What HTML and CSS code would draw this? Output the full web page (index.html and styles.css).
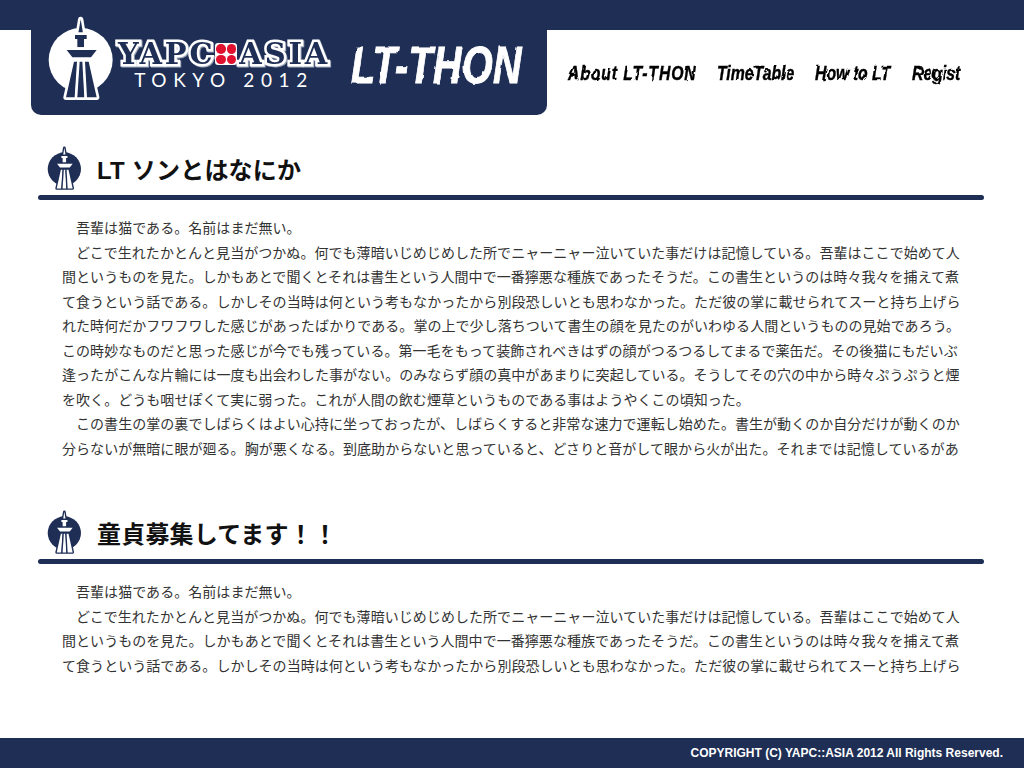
FILE: index.html
```html
<!DOCTYPE html>
<html lang="ja">
<head>
<meta charset="utf-8">
<title>YAPC::ASIA TOKYO 2012 LT-THON</title>
<link rel="stylesheet" href="styles.css">
</head>
<body>
<svg class="defs" width="0" height="0" aria-hidden="true">
  <defs>
    <filter id="brush" x="-5%" y="-10%" width="110%" height="120%">
      <feTurbulence type="fractalNoise" baseFrequency="0.09" numOctaves="2" seed="4" result="n"/>
      <feDisplacementMap in="SourceGraphic" in2="n" scale="3"/>
    </filter>
    <symbol id="tower" viewBox="0 0 240 300">
      <circle class="t-disc" cx="122" cy="150" r="96"/>
      <g class="t-shape">
        <path d="M122 28L129 70H115Z"/>
        <path d="M105 75H140V87H132V112H112V87H105Z"/>
        <path d="M80 120H170L153 142H97Z"/>
        <path d="M102 155H113L105 262H78Z"/>
        <path d="M119 155H129L134 262H112Z"/>
        <path d="M135 155H146L170 262H141Z"/>
      </g>
    </symbol>
  </defs>
</svg>
<div class="page">
  <header class="header">
    <div class="brand">
      <svg class="logo-tower"><use href="#tower"/></svg>
      <div class="wordmark">
        <div class="yapc"><span>YAPC</span><i class="dots"><b></b><b></b><b></b><b></b></i><span>ASIA</span></div>
        <div class="tokyo">TOKYO 2012</div>
      </div>
      <div class="thon">LT-THON</div>
    </div>
    <nav class="nav">
      <a class="nav-about">About LT-THON</a>
      <a class="nav-time">TimeTable</a>
      <a class="nav-how">How to LT</a>
      <a class="nav-regist">Regist</a>
    </nav>
  </header>
  <main class="main">
    <section class="section">
      <h2 class="title"><svg class="title-icon"><use href="#tower"/></svg><span class="title-text">LT ソンとはなにか</span></h2>
      <div class="rule"></div>
      <div class="text">
        <p>吾輩は猫である。名前はまだ無い。</p>
        <p>どこで生れたかとんと見当がつかぬ。何でも薄暗いじめじめした所でニャーニャー泣いていた事だけは記憶している。吾輩はここで始めて人間というものを見た。しかもあとで聞くとそれは書生という人間中で一番獰悪な種族であったそうだ。この書生というのは時々我々を捕えて煮て食うという話である。しかしその当時は何という考もなかったから別段恐しいとも思わなかった。ただ彼の掌に載せられてスーと持ち上げられた時何だかフワフワした感じがあったばかりである。掌の上で少し落ちついて書生の顔を見たのがいわゆる人間というものの見始であろう。この時妙なものだと思った感じが今でも残っている。第一毛をもって装飾されべきはずの顔がつるつるしてまるで薬缶だ。その後猫にもだいぶ逢ったがこんな片輪には一度も出会わした事がない。のみならず顔の真中があまりに突起している。そうしてその穴の中から時々ぷうぷうと煙を吹く。どうも咽せぽくて実に弱った。これが人間の飲む煙草というものである事はようやくこの頃知った。</p>
        <p>この書生の掌の裏でしばらくはよい心持に坐っておったが、しばらくすると非常な速力で運転し始めた。書生が動くのか自分だけが動くのか分らないが無暗に眼が廻る。胸が悪くなる。到底助からないと思っていると、どさりと音がして眼から火が出た。それまでは記憶しているがあ</p>
      </div>
    </section>
    <section class="section">
      <h2 class="title"><svg class="title-icon"><use href="#tower"/></svg><span class="title-text">童貞募集してます！！</span></h2>
      <div class="rule"></div>
      <div class="text">
        <p>吾輩は猫である。名前はまだ無い。</p>
        <p>どこで生れたかとんと見当がつかぬ。何でも薄暗いじめじめした所でニャーニャー泣いていた事だけは記憶している。吾輩はここで始めて人間というものを見た。しかもあとで聞くとそれは書生という人間中で一番獰悪な種族であったそうだ。この書生というのは時々我々を捕えて煮て食うという話である。しかしその当時は何という考もなかったから別段恐しいとも思わなかった。ただ彼の掌に載せられてスーと持ち上げら</p>
      </div>
    </section>
  </main>
  <footer class="footer">COPYRIGHT (C) YAPC::ASIA 2012 All Rights Reserved.</footer>
</div>
</body>
</html>
```
FILE: styles.css
```css
* { box-sizing: border-box; }
html, body { margin: 0; padding: 0; background: #fff; }
.defs { display: block; height: 0; }
.page {
  width: 1024px;
  height: 768px;
  display: flex;
  flex-direction: column;
  overflow: hidden;
  font-family: "Noto Sans CJK JP", sans-serif;
  color: #333;
}
.t-disc { fill: var(--disc); }
.t-shape { fill: var(--fg); }
.t-shape path { stroke: var(--disc); paint-order: stroke; stroke-width: 16; stroke-linejoin: round; }

.header {
  height: 115px;
  flex: none;
  display: flex;
  padding-left: 31px;
  background: linear-gradient(#1e2e55 30px, #fff 30px);
}
.brand {
  width: 516px;
  height: 115px;
  flex: none;
  display: flex;
  padding: 10px 0 0 9px;
  background: #1e2e55;
  border-radius: 0 0 10px 10px;
}
.logo-tower {
  --disc: #fff;
  --fg: #1e2e55;
  width: 80px;
  height: 100px;
  flex: none;
}
.wordmark {
  width: 218px;
  margin: 31px 0 0 -5px;
  color: #fff;
  display: flex;
  flex-direction: column;
  align-items: center;
  flex: none;
}
.yapc {
  display: flex;
  align-items: center;
  justify-content: center;
  height: 26px;
  font-family: "DejaVu Serif", serif;
  font-weight: 700;
  font-size: 29px;
  line-height: 26px;
  letter-spacing: 2.8px;
  color: #1e2e55;
  white-space: nowrap;
}
.yapc span {
  -webkit-text-stroke: 5px #fff;
  paint-order: stroke fill;
  filter: drop-shadow(1px 1px 0 #9aa3b5);
}
.dots {
  width: 22px;
  height: 22px;
  margin: 0 2px 0 0;
  display: grid;
  grid-template-columns: 1fr 1fr;
  gap: 1px;
  padding: 1px;
  background: #fff;
  border-radius: 3px;
  flex: none;
}
.dots b {
  background: #e0102f;
  border-radius: 50%;
}
.tokyo {
  margin-top: 3px;
  font-family: Lato, sans-serif;
  font-size: 19px;
  line-height: 20px;
  letter-spacing: 6.6px;
  white-space: nowrap;
}
.thon {
  margin: 30px 0 0 18px;
  font-family: "Liberation Sans", sans-serif;
  font-weight: 700;
  font-style: italic;
  font-size: 52px;
  line-height: 50px;
  letter-spacing: 0.5px;
  color: #fff;
  -webkit-text-stroke: 1px #fff;
  white-space: nowrap;
  transform: scaleX(0.76);
  transform-origin: left center;
  filter: url(#brush);
}
.nav {
  display: flex;
  gap: 21px;
  padding: 60px 0 0 21px;
  font-family: "Liberation Sans", sans-serif;
  font-weight: 700;
  font-style: italic;
  font-size: 20px;
  line-height: 26px;
  color: #000;
  white-space: nowrap;
  -webkit-text-stroke: 0.4px #000;
  filter: url(#brush);
}
.nav a { display: block; transform: scaleX(0.79); transform-origin: left center; }
.nav-about { width: 128px; letter-spacing: 1.1px; }
.nav-time { width: 77px; }
.nav-how { width: 76px; }
.nav-regist { width: 48px; }

.main {
  flex: 1;
  min-height: 0;
  padding: 29px 40px 0 38px;
}
.section { height: 364px; }
.title {
  --disc: #1e2e55;
  --fg: #fff;
  display: flex;
  align-items: center;
  gap: 12px;
  height: 50px;
  margin: 0 0 1px 5px;
  font-family: "Liberation Sans", "Noto Sans CJK JP", sans-serif;
  font-size: 24px;
  font-weight: 700;
  line-height: 50px;
  letter-spacing: 0.2px;
  color: #111;
}
.title-icon { width: 42px; height: 52px; flex: none; }
.title-text { padding-top: 3px; }
.rule {
  height: 5px;
  background: #1e2e55;
  border-radius: 3px;
}
.text {
  width: 900px;
  margin: 15px 0 0 24px;
  font-size: 14px;
  line-height: 24.5px;
  letter-spacing: 0.05px;
}
.text p { margin: 0; text-indent: 14px; }

.footer {
  height: 30px;
  flex: none;
  padding-right: 21px;
  background: #1e2e55;
  color: #fff;
  font-family: "Liberation Sans", sans-serif;
  font-weight: 700;
  font-size: 12px;
  line-height: 30px;
  text-align: right;
}
```
